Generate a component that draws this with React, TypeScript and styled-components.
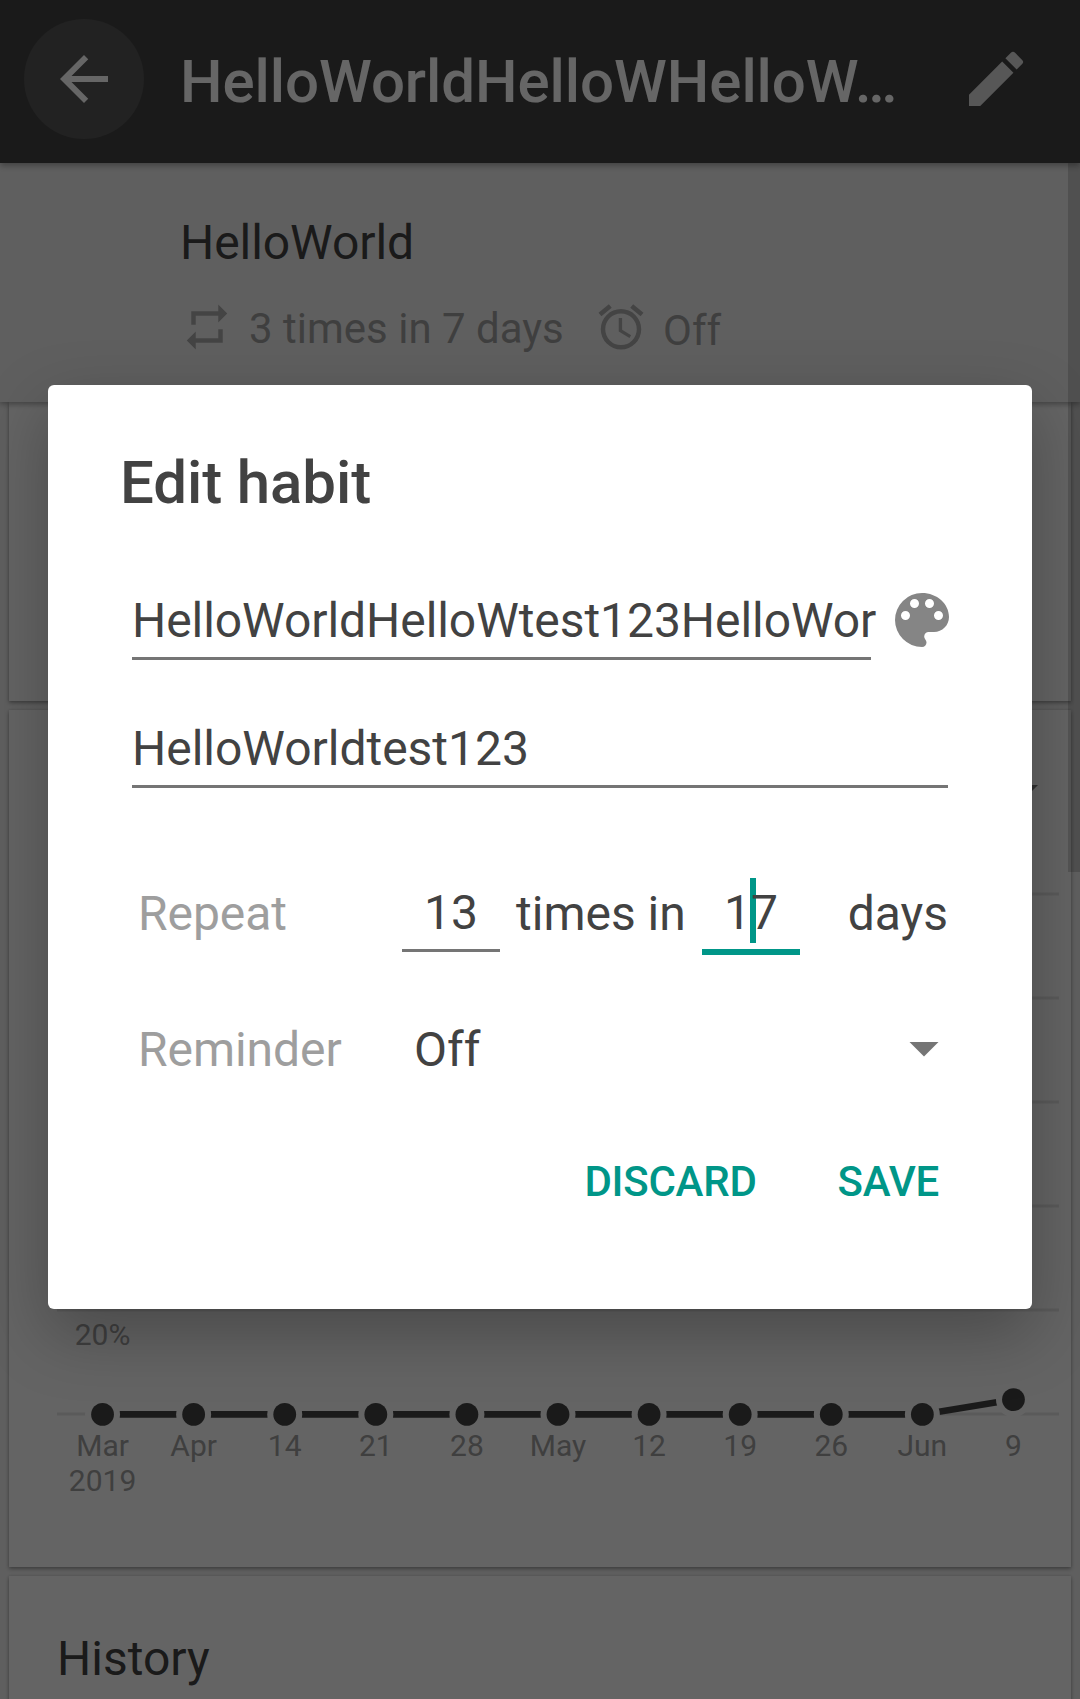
import React from "react";
import styled, { createGlobalStyle } from "styled-components";

const GlobalStyle = createGlobalStyle`
  html, body { margin: 0; padding: 0; }
  body { font-family: Roboto, "Noto Sans", sans-serif; color: #424242; }
  * { box-sizing: border-box; }
`;

const Screen = styled.div`
  position: relative;
  width: 1080px;
  height: 1699px;
  overflow: hidden;
  background: #eeeeee;
  display: flex;
  flex-direction: column;
`;

const Toolbar = styled.header`
  position: relative;
  z-index: 2;
  flex: none;
  display: flex;
  align-items: flex-start;
  height: 163px;
  padding: 19px 48px 0 24px;
  background: #424242;
  box-shadow: 0 3px 6px rgba(0, 0, 0, 0.3);
`;

const BackButton = styled.div`
  display: flex;
  align-items: center;
  justify-content: center;
  width: 120px;
  height: 120px;
  border-radius: 50%;
  background: #555555;
  color: #ffffff;
`;

const ToolbarTitle = styled.h1`
  flex: 1;
  margin: 32px 0 0 36px;
  font-size: 60px;
  font-weight: 500;
  letter-spacing: -0.06px;
  line-height: 61px;
  white-space: nowrap;
  color: #ffffff;
`;

const EditButton = styled.div`
  display: flex;
  margin-top: 24px;
  color: #d9d9d9;
`;

const Summary = styled.section`
  position: relative;
  z-index: 1;
  flex: none;
  height: 239px;
  padding: 52px 0 0 180px;
  background: #eeeeee;
  box-shadow: 0 2px 6px rgba(0, 0, 0, 0.35);
`;

const Question = styled.div`
  font-size: 48px;
  letter-spacing: -0.06px;
  line-height: 56px;
`;

const Facts = styled.div`
  display: flex;
  align-items: center;
  height: 54px;
  margin-top: 29px;
  color: #aaaaaa;
  font-size: 42px;
  line-height: 54px;
`;

const Fact = styled.span<{ $left: number; $drop: number; $width?: number }>`
  margin-left: ${(p) => p.$left}px;
  padding-top: ${(p) => p.$drop}px;
  width: ${(p) => (p.$width ? `${p.$width}px` : "auto")};
  color: #9e9e9e;
  white-space: nowrap;
`;

const Cards = styled.main`
  display: flex;
  flex-direction: column;
  gap: 9px;
  padding: 0 9px;
`;

const Card = styled.section<{ $height: number }>`
  flex: none;
  height: ${(p) => p.$height}px;
  padding: 0 12px 0 48px;
  background: #fafafa;
  box-shadow: 0 2px 4px rgba(0, 0, 0, 0.32), 0 0 3px rgba(0, 0, 0, 0.12);
`;

const CardHeader = styled.div`
  display: flex;
  justify-content: flex-end;
  padding: 75px 21px 0 0;
`;

const CardTitle = styled.h2`
  margin: 0;
  padding-top: 55px;
  font-size: 48px;
  font-weight: 400;
  line-height: 56px;
`;

const Chart = styled.svg`
  display: block;
  margin-top: 80px;
  font-size: 30px;
`;

const ScrollThumb = styled.div`
  position: absolute;
  z-index: 3;
  top: 163px;
  right: 0;
  width: 12px;
  height: 709px;
  background: rgba(0, 0, 0, 0.16);
`;

const Scrim = styled.div`
  position: absolute;
  z-index: 4;
  inset: 0;
  display: flex;
  align-items: flex-start;
  justify-content: center;
  padding-top: 385px;
  background: rgba(0, 0, 0, 0.6);
`;

const Dialog = styled.div`
  width: 984px;
  height: 924px;
  padding: 62px 74px 0 72px;
  border-radius: 6px;
  background: #ffffff;
  box-shadow: 0 24px 66px rgba(0, 0, 0, 0.27);
`;

const DialogTitle = styled.h2`
  margin: 0;
  font-size: 60px;
  font-weight: 500;
  letter-spacing: -0.1px;
  line-height: 71px;
`;

const Form = styled.div`
  display: flex;
  flex-direction: column;
  padding-left: 12px;
  font-size: 48px;
  letter-spacing: -0.06px;
  line-height: 56px;
  white-space: nowrap;
`;

const NameRow = styled.div`
  display: flex;
  align-items: flex-end;
  gap: 15px;
  height: 76px;
  margin-top: 66px;
  color: #858585;
`;

const Field = styled.div<{ $width: number; $centered?: boolean; $focused?: boolean }>`
  position: relative;
  flex: none;
  width: ${(p) => p.$width}px;
  padding-bottom: 8px;
  color: #424242;
  text-align: ${(p) => (p.$centered ? "center" : "left")};
  border-bottom: ${(p) => (p.$focused ? "6px solid #009688" : "3px solid #757575")};
`;

const Description = styled.div`
  margin-top: 61px;
  letter-spacing: -0.02px;
`;

const PaletteSlot = styled.div`
  display: flex;
  align-self: flex-start;
`;

const SettingRow = styled.div<{ $top: number; $height: number }>`
  display: flex;
  flex: none;
  align-items: flex-start;
  height: ${(p) => p.$height}px;
  margin-top: ${(p) => p.$top}px;
  padding-left: 6px;
`;

const Label = styled.div<{ $width: number; $drop?: number }>`
  flex: none;
  width: ${(p) => p.$width}px;
  padding-top: ${(p) => p.$drop ?? 0}px;
  color: #9e9e9e;
`;

const Words = styled.div<{ $width: number; $end?: boolean }>`
  flex: none;
  width: ${(p) => p.$width}px;
  padding: 1px 0 0 ${(p) => (p.$end ? 0 : 16)}px;
  letter-spacing: 0;
  text-align: ${(p) => (p.$end ? "right" : "left")};
`;

const Caret = styled.span`
  position: absolute;
  top: -7px;
  left: 48px;
  width: 6px;
  height: 65px;
  background: #009688;
`;

const FieldText = styled.span`
  position: relative;
`;

const Spinner = styled.div`
  flex: 1;
  display: flex;
  align-items: center;
  justify-content: space-between;
  padding-right: 19px;
  letter-spacing: 0;
`;

const Triangle = styled.span`
  width: 30px;
  height: 15px;
  background: #757575;
  clip-path: polygon(0 0, 100% 0, 50% 100%);
`;

const SpinnerArrow = styled(Triangle)`
  margin-bottom: 2px;
`;

const Actions = styled.div`
  display: flex;
  justify-content: flex-end;
  gap: 81px;
  margin-top: 80px;
  padding-right: 19px;
  font-size: 42px;
  font-weight: 500;
  letter-spacing: -0.25px;
  line-height: 48px;
  color: #009688;
`;

const Icon = ({ d, size }: { d: string; size: number }) => (
  <svg width={size} height={size} viewBox="0 0 24 24" fill="currentColor">
    <path d={d} />
  </svg>
);

const ICONS = {
  back: "M20 11H7.83l5.59-5.59L12 4l-8 8 8 8 1.41-1.41L7.83 13H20v-2z",
  edit: "M3 17.25V21h3.75L17.81 9.94l-3.75-3.75L3 17.25zM20.71 7.04a1 1 0 0 0 0-1.41l-2.34-2.34a1 1 0 0 0-1.41 0l-1.83 1.83 3.75 3.75 1.83-1.83z",
  repeat: "M7 7h10v3l4-4-4-4v3H5v6h2V7zm10 10H7v-3l-4 4 4 4v-3h12v-6h-2v4z",
  alarm:
    "M22 5.72l-4.6-3.86-1.29 1.53 4.6 3.86L22 5.72zM7.88 3.39L6.6 1.86 2 5.71l1.29 1.53 4.59-3.85zM12.5 8H11v6l4.75 2.85.75-1.23-4-2.37V8zM12 4a9 9 0 1 0 0 18 9 9 0 0 0 0-18zm0 16a7 7 0 1 1 0-14 7 7 0 0 1 0 14z",
  palette:
    "M12 3a9 9 0 0 0 0 18c.83 0 1.5-.67 1.5-1.5 0-.39-.15-.74-.39-1.01-.23-.26-.38-.61-.38-.99 0-.83.67-1.5 1.5-1.5H16c2.76 0 5-2.24 5-5 0-4.42-4.03-8-9-8zm-5.5 9a1.5 1.5 0 1 1 0-3 1.5 1.5 0 0 1 0 3zm3-4a1.5 1.5 0 1 1 0-3 1.5 1.5 0 0 1 0 3zm5 0a1.5 1.5 0 1 1 0-3 1.5 1.5 0 0 1 0 3zm3 4a1.5 1.5 0 1 1 0-3 1.5 1.5 0 0 1 0 3z",
};

const POINTS = [
  { label: "Mar", y: 534.4 },
  { label: "Apr", y: 534.4 },
  { label: "14", y: 534.4 },
  { label: "21", y: 534.4 },
  { label: "28", y: 534.4 },
  { label: "May", y: 534.4 },
  { label: "12", y: 534.4 },
  { label: "19", y: 534.4 },
  { label: "26", y: 534.4 },
  { label: "Jun", y: 534.4 },
  { label: "9", y: 519.6 },
];
const COLUMN = 1002 / POINTS.length;
const columnX = (i: number) => COLUMN * (i + 0.5);

const ScoreChart = () => (
  <Chart width="1002" height="640" viewBox="0 0 1002 640">
    {[14, 118, 222, 326, 430, 534].map((y) => (
      <line key={y} x1="0" x2="1002" y1={y} y2={y} stroke="#e0e0e0" strokeWidth="3" />
    ))}
    <polyline
      points={POINTS.map((p, i) => `${columnX(i)},${p.y}`).join(" ")}
      fill="none"
      stroke="#424242"
      strokeWidth="6.6"
    />
    {POINTS.map((p, i) => (
      <g key={p.label}>
        <circle cx={columnX(i)} cy={p.y} r="17.5" fill="#fafafa" />
        <circle cx={columnX(i)} cy={p.y} r="11.4" fill="#424242" />
        <text x={columnX(i)} y="576" textAnchor="middle" fill="#9e9e9e">
          {p.label}
        </text>
      </g>
    ))}
    <text x={columnX(0)} y="465" textAnchor="middle" fill="#9e9e9e">
      20%
    </text>
    <text x={columnX(0)} y="611" textAnchor="middle" fill="#9e9e9e">
      2019
    </text>
  </Chart>
);

export default function App() {
  return (
    <Screen>
      <GlobalStyle />
      <Toolbar>
        <BackButton>
          <Icon d={ICONS.back} size={72} />
        </BackButton>
        <ToolbarTitle>HelloWorldHelloWHelloW…</ToolbarTitle>
        <EditButton>
          <Icon d={ICONS.edit} size={72} />
        </EditButton>
      </Toolbar>
      <Summary>
        <Question>HelloWorld</Question>
        <Facts>
          <Icon d={ICONS.repeat} size={54} />
          <Fact $left={15} $drop={4} $width={345}>
            3 times in 7 days
          </Fact>
          <Icon d={ICONS.alarm} size={54} />
          <Fact $left={15} $drop={8}>
            Off
          </Fact>
        </Facts>
      </Summary>
      <Cards>
        <Card $height={299} />
        <Card $height={857}>
          <CardHeader>
            <Triangle />
          </CardHeader>
          <ScoreChart />
        </Card>
        <Card $height={300}>
          <CardTitle>History</CardTitle>
        </Card>
      </Cards>
      <ScrollThumb />
      <Scrim>
        <Dialog>
          <DialogTitle>Edit habit</DialogTitle>
          <Form>
            <NameRow>
              <Field $width={739}>HelloWorldHelloWtest123HelloWor</Field>
              <PaletteSlot>
                <Icon d={ICONS.palette} size={72} />
              </PaletteSlot>
            </NameRow>
            <Description>
              <Field $width={816}>HelloWorldtest123</Field>
            </Description>
            <SettingRow $top={97} $height={70}>
              <Label $width={264} $drop={1}>
                Repeat
              </Label>
              <Field $width={98} $centered>
                13
              </Field>
              <Words $width={202}>times in</Words>
              <Field $width={98} $centered $focused>
                <Caret />
                <FieldText>17</FieldText>
              </Field>
              <Words $width={148} $end>
                days
              </Words>
            </SettingRow>
            <SettingRow $top={67} $height={56}>
              <Label $width={276}>Reminder</Label>
              <Spinner>
                <span>Off</span>
                <SpinnerArrow />
              </Spinner>
            </SettingRow>
            <Actions>
              <span>DISCARD</span>
              <span>SAVE</span>
            </Actions>
          </Form>
        </Dialog>
      </Scrim>
    </Screen>
  );
}
